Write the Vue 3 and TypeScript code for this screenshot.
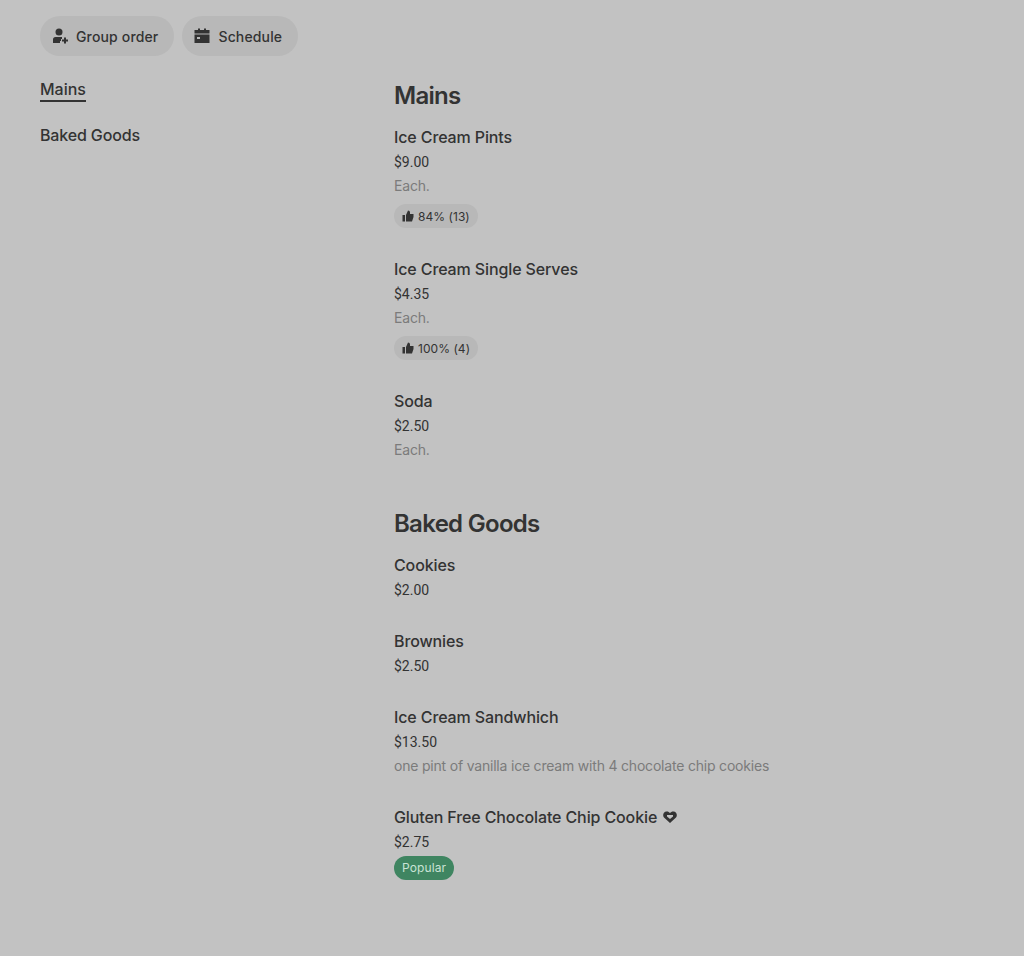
<script setup lang="ts">
type Item = { name: string; price: string; desc?: string; rating?: string; popular?: boolean; heart?: boolean };
type Section = { title: string; items: Item[] };

const sections: Section[] = [
  {
    title: "Mains",
    items: [
      { name: "Ice Cream Pints", price: "$9.00", desc: "Each.", rating: "84% (13)" },
      { name: "Ice Cream Single Serves", price: "$4.35", desc: "Each.", rating: "100% (4)" },
      { name: "Soda", price: "$2.50", desc: "Each." },
    ],
  },
  {
    title: "Baked Goods",
    items: [
      { name: "Cookies", price: "$2.00" },
      { name: "Brownies", price: "$2.50" },
      { name: "Ice Cream Sandwhich", price: "$13.50", desc: "one pint of vanilla ice cream with 4 chocolate chip cookies" },
      { name: "Gluten Free Chocolate Chip Cookie", price: "$2.75", popular: true, heart: true },
    ],
  },
];
</script>

<template>
  <div class="page">
    <div class="actions">
      <button class="pill">
        <svg class="pill-icon" viewBox="0 0 16 16" width="16" height="16">
          <circle cx="7" cy="4" r="3.500" fill="#333" />
          <path d="M1 15v-3.500A2.500 2.500 0 0 1 3.500 9h6.500v2h-1v2h-1v2z" fill="#333" />
          <path d="M12 9.500h2v2h2v2h-2v2h-2v-2h-2v-2h2z" fill="#333" />
        </svg>
        Group order
      </button>
      <button class="pill">
        <svg class="pill-icon" viewBox="0 0 16 16" width="16" height="16">
          <path d="M4 0.500h2v1.500h4V0.500h2V2h3.500v3.500H0.500V2H4z" fill="#333" />
          <path d="M0.500 6.500h15V15H0.500zM3 9v2h3V9z" fill="#333" fill-rule="evenodd" />
        </svg>
        Schedule
      </button>
    </div>

    <div class="layout">
      <nav class="side">
        <a class="side-link active">Mains</a>
        <a class="side-link">Baked Goods</a>
      </nav>

      <main class="menu">
        <section v-for="s in sections" :key="s.title" class="section">
          <h2>{{ s.title }}</h2>
          <div v-for="item in s.items" :key="item.name" class="item">
            <div class="name">
              {{ item.name }}
              <svg v-if="item.heart" class="heart" viewBox="0 0 14 12" width="14" height="12">
                <path d="M7 12 1 6.500C-.5 4.800 0 1.500 3 .600 4.800.200 6 1 7 2c1-1 2.200-1.800 4-1.400 3 .900 3.500 4.200 2 5.900z" fill="#333" />
                <path d="M4 4h6v1.500L7 8 4 5.500z" fill="#c2c2c2" />
              </svg>
            </div>
            <div class="price">{{ item.price }}</div>
            <div v-if="item.desc" class="desc">{{ item.desc }}</div>
            <div v-if="item.rating" class="rating">
              <svg viewBox="0 0 12 12" width="12" height="12">
                <path d="M0.500 5h2.500v6.500H0.500zM4 5l2-4.500c1.200 0 2 .800 2 2V4h3.500v3l-1.500 4.500H4z" fill="#333" />
              </svg>
              {{ item.rating }}
            </div>
            <div v-if="item.popular" class="popular">Popular</div>
          </div>
        </section>
      </main>
    </div>
  </div>
</template>

<style>
html,
body {
  background: #c2c2c2;
}
</style>

<style scoped>
.page {
  min-height: 956px;
  background: #c2c2c2;
  color: #333;
  font-family: "Inter", "Liberation Sans", sans-serif;
  box-sizing: border-box;
  padding: 16px 40px 0;
}

.actions {
  display: flex;
  gap: 8px;
}

.pill {
  display: flex;
  align-items: center;
  gap: 8px;
  height: 40px;
  padding: 0 16px 0 12px;
  border: none;
  border-radius: 20px;
  background: #b8b8b8;
  color: #333;
  font: inherit;
  font-size: 14px;
  font-weight: 500;
  letter-spacing: 0.15px;
}

.layout {
  display: flex;
  margin-top: 23px;
}

.side {
  width: 354px;
  flex: none;
  display: flex;
  flex-direction: column;
  align-items: flex-start;
  gap: 23px;
}

.side-link {
  font-size: 16px;
  font-weight: 500;
  line-height: 20px;
}

.side-link.active {
  padding-bottom: 1px;
  border-bottom: 2px solid #333;
}

.side-link:not(.active) {
  letter-spacing: -0.15px;
}

.menu {
  flex: 1;
  padding-top: 1px;
}

.section {
  margin-bottom: 48px;
}

h2 {
  margin: 0 0 13px;
  font-size: 24px;
  font-weight: 600;
  line-height: 32px;
  letter-spacing: -0.7px;
}

.item {
  margin-bottom: 29px;
}

.name {
  display: flex;
  align-items: center;
  gap: 6px;
  font-size: 16px;
  font-weight: 500;
  line-height: 24px;
  letter-spacing: -0.12px;
}

.price {
  margin-top: 3px;
  font-family: "Roboto", "Inter", sans-serif;
  font-size: 14px;
  line-height: 20px;
}

.desc {
  margin-top: 4px;
  font-size: 14px;
  line-height: 20px;
  letter-spacing: -0.2px;
  color: #7b7b7b;
}

.rating {
  display: inline-flex;
  align-items: center;
  gap: 4px;
  height: 24px;
  margin-top: 8px;
  padding: 0 8px;
  border-radius: 12px;
  background: #b8b8b8;
  font-size: 12px;
  letter-spacing: 0.05px;
}

.popular {
  width: fit-content;
  height: 24px;
  margin-top: 4px;
  padding: 0 8px;
  border-radius: 12px;
  background: #3f8561;
  color: #c9e3d4;
  font-size: 12px;
  line-height: 24px;
  letter-spacing: 0.1px;
}
</style>
